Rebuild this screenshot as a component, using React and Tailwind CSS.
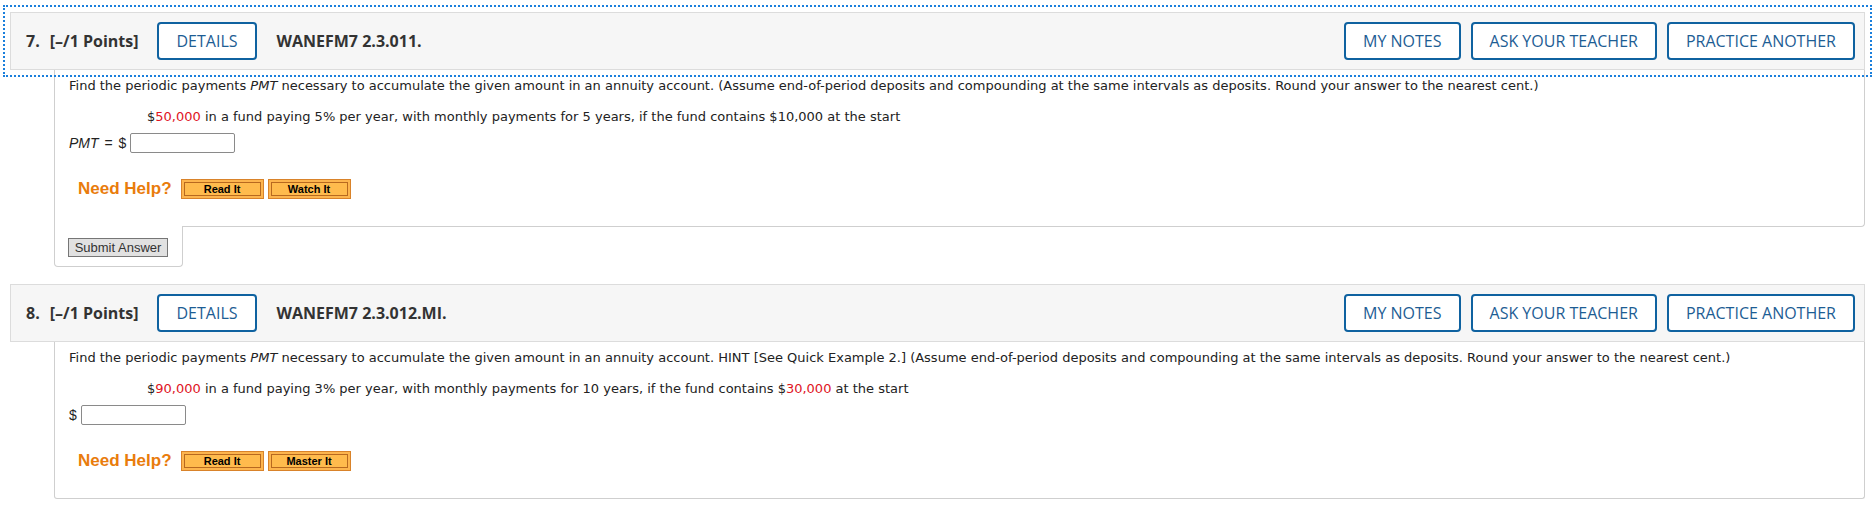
import React from "react";

const headFont = { fontFamily: '"Open Sans", "Noto Sans", sans-serif' };
const arial = { fontFamily: '"Liberation Sans", Arial, sans-serif' };

function OutlineButton({ children }) {
  return (
    <button className="h-[38px] rounded-[4px] border-2 border-[#0f62a0] bg-white px-[17px] text-[16px] text-[#1d5d94] uppercase leading-none">
      {children}
    </button>
  );
}

function HelpButton({ children }) {
  return (
    <span className="inline-flex h-[20px] w-[83px] border border-[#d9832a] bg-[#fdb54e] p-[2px]">
      <span className="flex flex-1 items-center justify-center border border-[#b8691f] bg-[#ffbb4d] text-[11px] font-bold leading-none text-black">
        {children}
      </span>
    </span>
  );
}

function Header({ num, code, focused }) {
  return (
    <div
      style={headFont}
      className={
        "flex h-[58px] items-center border border-[#dcdcdc] bg-[#f6f6f6] pl-[15px] pr-[9px] text-[#333] " +
        (focused ? "outline-2 outline-dotted outline-[#1a7fdc] outline-offset-[5px]" : "")
      }
    >
      <span className="text-[16px] font-bold">{num}.</span>
      <span className="ml-[10px] text-[16px] font-bold">[–/1 Points]</span>
      <div className="ml-[19px]">
        <OutlineButton>Details</OutlineButton>
      </div>
      <span className="ml-[20px] text-[16px] font-bold">{code}</span>
      <div className="ml-auto flex gap-[10px]">
        <OutlineButton>My Notes</OutlineButton>
        <OutlineButton>Ask Your Teacher</OutlineButton>
        <OutlineButton>Practice Another</OutlineButton>
      </div>
    </div>
  );
}

function Answer({ label }) {
  return (
    <div className="mt-[8px] flex items-center gap-[4px] text-[14px] text-[#222]" style={arial}>
      {label}
      <input className="h-[20px] w-[105px] rounded-[2px] border border-[#8a8a8a] bg-white" />
    </div>
  );
}

function NeedHelp({ second }) {
  return (
    <div className="mt-[26px] ml-[9px] flex items-center" style={arial}>
      <span className="text-[17px] font-bold text-[#e97c0c]">Need Help?</span>
      <div className="ml-[9px] flex gap-[4px]">
        <HelpButton>Read It</HelpButton>
        <HelpButton>{second}</HelpButton>
      </div>
    </div>
  );
}

function Body({ hint, amount, rate, years, start, startRed, answerLabel, second }) {
  return (
    <div className="px-[14px] pt-[8px] pb-[27px] text-[13px] leading-[16px] text-[#222]" style={{ fontFamily: '"DejaVu Sans", Verdana, sans-serif' }}>
      <p>
        Find the periodic payments <i>PMT</i> necessary to accumulate the given amount in an annuity account.
        {hint ? " HINT [See Quick Example 2.]" : ""} (Assume end-of-period deposits and compounding at the same intervals as
        deposits. Round your answer to the nearest cent.)
      </p>
      <p className="mt-[15px] ml-[78px]">
        $<span className="text-[#e0141e]">{amount}</span> in a fund paying {rate}% per year, with monthly payments for {years} years, if
        the fund contains ${startRed ? <span className="text-[#e0141e]">{start}</span> : start} at the start
      </p>
      <Answer label={answerLabel} />
      <NeedHelp second={second} />
    </div>
  );
}

export default function App() {
  return (
    <div className="h-[518px] w-[1876px] overflow-hidden bg-white pt-[12px] pl-[10px] pr-[11px]">
      <Header num={7} code="WANEFM7 2.3.011." focused />
      <div className="ml-[44px]">
        <div className="rounded-br-[4px] border-x border-b border-[#cfcfcf]">
          <Body
            amount="50,000"
            rate={5}
            years={5}
            start="10,000"
            answerLabel={<span><i>PMT</i><span className="mx-[2px]"> = </span>$</span>}
            second="Watch It"
          />
        </div>
        <div className="relative -mt-px flex h-[41px] w-[129px] items-start rounded-b-[4px] border-x border-b border-[#cfcfcf] bg-white pt-[12px] pl-[13px]">
          <button
            className="block h-[19px] w-[100px] border border-[#767676] bg-[#e1e1e1] text-[13px] leading-none text-[#333]"
            style={arial}
          >
            Submit Answer
          </button>
        </div>
      </div>

      <div className="mt-[17px]">
        <Header num={8} code="WANEFM7 2.3.012.MI." />
        <div className="ml-[44px] rounded-b-[3px] border-x border-b border-[#cfcfcf]">
          <Body
            hint
            amount="90,000"
            rate={3}
            years={10}
            start="30,000"
            startRed
            answerLabel="$"
            second="Master It"
          />
        </div>
      </div>
    </div>
  );
}
